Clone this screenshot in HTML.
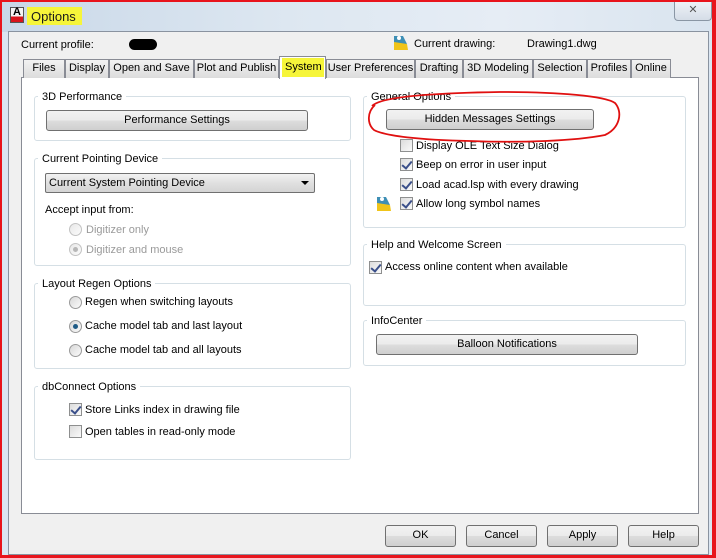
<!DOCTYPE html>
<html><head><meta charset="utf-8"><style>
*{box-sizing:border-box;margin:0;padding:0}
body{width:716px;height:558px;position:relative;overflow:hidden;background:#dbe6f2;font-family:"Liberation Sans",sans-serif;font-size:11px;color:#000}
.a{position:absolute}
.t{position:absolute;white-space:nowrap;font-size:11px;line-height:14px}
.grp{position:absolute;border:1px solid #d5dfe5;border-radius:3px}
.lbl{position:absolute;background:#fff;padding:0 4px;left:3px;top:-7px;line-height:14px;white-space:nowrap;font-size:11px}
.btn{position:absolute;border:1px solid #707070;border-radius:3px;background:linear-gradient(#f2f2f2 0,#ebebeb 50%,#dddddd 51%,#cfcfcf 100%);text-align:center;line-height:19px;font-size:11px;white-space:nowrap}
.cb{position:absolute;width:13px;height:13px;border:1px solid #8e8f8f;background:linear-gradient(135deg,#dcdcdc,#fafafa)}
.cb.on::after{content:"";position:absolute;left:3px;top:0px;width:4px;height:8px;border:solid #3a4f8a;border-width:0 2px 2px 0;transform:rotate(40deg)}
.rd{position:absolute;width:13px;height:13px;border:1px solid #9a9a9a;border-radius:50%;background:linear-gradient(135deg,#d8d8d8,#fbfbfb)}
.rd.on::after{content:"";position:absolute;left:3px;top:3px;width:5px;height:5px;border-radius:50%;background:#1f5b86}
.rd.dis{opacity:.6}
.rd.dis.on::after{background:#888}
.tab{position:absolute;top:59px;height:19px;border:1px solid #898c95;border-bottom:none;background:linear-gradient(#f2f2f2,#dcdcdc);line-height:17px;text-align:center;font-size:11px;white-space:nowrap;overflow:hidden}
</style></head><body>
<div class="a" style="left:0;top:0;width:716px;height:558px;border:2px solid #e8141c;border-right-width:4px;border-bottom-width:3px"></div>
<div class="a" style="left:2px;top:2px;width:710px;height:30px;background:linear-gradient(90deg,#c9d8e8,#dde7f1 40%,#e6edf5 70%,#d9e4ef)"></div>
<div class="a" style="left:10px;top:7px;width:14px;height:16px;background:linear-gradient(#f4f4f4 0,#f4f4f4 60%,#d8141c 60%);border:1px solid #555;font-size:11px;font-weight:bold;line-height:9px;text-align:center">A</div>
<div class="a" style="left:27px;top:7px;width:55px;height:18px;background:#f6f53a"></div>
<div class="t" style="left:31px;top:9px;font-size:13px;line-height:16px;color:#1b1b1b">Options</div>
<div class="a" style="left:674px;top:2px;width:38px;height:19px;border:1px solid #8a96a4;border-top:none;border-radius:0 0 4px 4px;background:linear-gradient(#eef2f7,#d5dde7);text-align:center;font-size:11px;color:#555;line-height:17px">✕</div>
<div class="a" style="left:8px;top:31px;width:701px;height:524px;background:#f0f0f0;border:1px solid #8a93a0"></div>
<div class="t" style="left:21px;top:38px">Current profile:</div>
<div class="a" style="left:129px;top:39px;width:28px;height:11px;background:#000;border-radius:6px"></div>
<svg class="a" style="left:393px;top:35px" width="16" height="16"><polygon points="1,4 14,9 15,15 1,15" fill="#f0c419"/><polygon points="1,1 10,1 14,9 1,7" fill="#3e8fb5"/><circle cx="6" cy="3" r="2" fill="#fff"/></svg>
<div class="t" style="left:414px;top:37px">Current drawing:</div>
<div class="t" style="left:527px;top:37px">Drawing1.dwg</div>
<div class="a" style="left:21px;top:77px;width:678px;height:437px;background:#fff;border:1px solid #898c95"></div>
<div class="tab" style="left:23px;width:42px">Files</div>
<div class="tab" style="left:65px;width:44px">Display</div>
<div class="tab" style="left:109px;width:85px">Open and Save</div>
<div class="tab" style="left:194px;width:85px">Plot and Publish</div>
<div class="tab" style="left:279px;top:56px;height:23px;width:47px;background:#fff;z-index:2"></div>
<div class="a" style="left:282px;top:58px;width:42px;height:19px;background:#f6f53a;z-index:3"></div>
<div class="t" style="left:285px;top:60px;z-index:4">System</div>
<div class="tab" style="left:326px;width:89px">User Preferences</div>
<div class="tab" style="left:415px;width:48px">Drafting</div>
<div class="tab" style="left:463px;width:70px">3D Modeling</div>
<div class="tab" style="left:533px;width:54px">Selection</div>
<div class="tab" style="left:587px;width:44px">Profiles</div>
<div class="tab" style="left:631px;width:40px">Online</div>

<div class="grp" style="left:34px;top:96px;width:317px;height:45px"><span class="lbl">3D Performance</span></div>
<div class="btn" style="left:46px;top:110px;width:262px;height:21px">Performance Settings</div>

<div class="grp" style="left:34px;top:158px;width:317px;height:108px"><span class="lbl">Current Pointing Device</span></div>
<div class="a" style="left:45px;top:173px;width:270px;height:20px;border:1px solid #707070;border-radius:2px;background:linear-gradient(#f2f2f2,#e0e0e0 50%,#d4d4d4)"></div>
<div class="t" style="left:49px;top:176px">Current System Pointing Device</div>
<div class="a" style="left:301px;top:181px;width:0;height:0;border-left:4px solid transparent;border-right:4px solid transparent;border-top:4px solid #000"></div>
<div class="t" style="left:45px;top:203px">Accept input from:</div>
<div class="rd dis" style="left:69px;top:223px"></div><div class="t" style="left:86px;top:223px;color:#9a9a9a">Digitizer only</div>
<div class="rd dis on" style="left:69px;top:243px"></div><div class="t" style="left:86px;top:243px;color:#9a9a9a">Digitizer and mouse</div>

<div class="grp" style="left:34px;top:283px;width:317px;height:86px"><span class="lbl">Layout Regen Options</span></div>
<div class="rd" style="left:69px;top:296px"></div><div class="t" style="left:85px;top:295px">Regen when switching layouts</div>
<div class="rd on" style="left:69px;top:320px"></div><div class="t" style="left:85px;top:319px">Cache model tab and last layout</div>
<div class="rd" style="left:69px;top:344px"></div><div class="t" style="left:85px;top:343px">Cache model tab and all layouts</div>

<div class="grp" style="left:34px;top:386px;width:317px;height:74px"><span class="lbl">dbConnect Options</span></div>
<div class="cb on" style="left:69px;top:403px"></div><div class="t" style="left:85px;top:403px">Store Links index in drawing file</div>
<div class="cb" style="left:69px;top:425px"></div><div class="t" style="left:85px;top:425px">Open tables in read-only mode</div>

<div class="grp" style="left:363px;top:96px;width:323px;height:132px"><span class="lbl">General Options</span></div>
<div class="btn" style="left:386px;top:109px;width:208px;height:21px">Hidden Messages Settings</div>
<div class="cb" style="left:400px;top:139px"></div><div class="t" style="left:416px;top:139px">Display OLE Text Size Dialog</div>
<div class="cb on" style="left:400px;top:158px"></div><div class="t" style="left:416px;top:158px">Beep on error in user input</div>
<div class="cb on" style="left:400px;top:178px"></div><div class="t" style="left:416px;top:178px">Load acad.lsp with every drawing</div>
<svg class="a" style="left:376px;top:196px" width="16" height="16"><polygon points="1,4 14,9 15,15 1,15" fill="#f0c419"/><polygon points="1,1 10,1 14,9 1,7" fill="#3e8fb5"/><circle cx="6" cy="3" r="2" fill="#fff"/></svg>
<div class="cb on" style="left:400px;top:197px"></div><div class="t" style="left:416px;top:197px">Allow long symbol names</div>

<div class="grp" style="left:363px;top:244px;width:323px;height:62px"><span class="lbl">Help and Welcome Screen</span></div>
<div class="cb on" style="left:369px;top:261px"></div><div class="t" style="left:385px;top:260px">Access online content when available</div>

<div class="grp" style="left:363px;top:320px;width:323px;height:46px"><span class="lbl">InfoCenter</span></div>
<div class="btn" style="left:376px;top:334px;width:262px;height:21px">Balloon Notifications</div>

<svg class="a" style="left:0;top:0" width="716" height="558"><path d="M372,106 C380,97 430,93 500,92 C560,92 605,96 615,103 C623,112 620,128 605,135 C575,141 520,143 470,141 C420,140 385,136 374,130 C367,124 367,112 375,105" fill="none" stroke="#e01010" stroke-width="1.8"/></svg>

<div class="btn" style="left:385px;top:525px;width:71px;height:22px">OK</div>
<div class="btn" style="left:466px;top:525px;width:71px;height:22px">Cancel</div>
<div class="btn" style="left:547px;top:525px;width:71px;height:22px">Apply</div>
<div class="btn" style="left:628px;top:525px;width:71px;height:22px">Help</div>
</body></html>
